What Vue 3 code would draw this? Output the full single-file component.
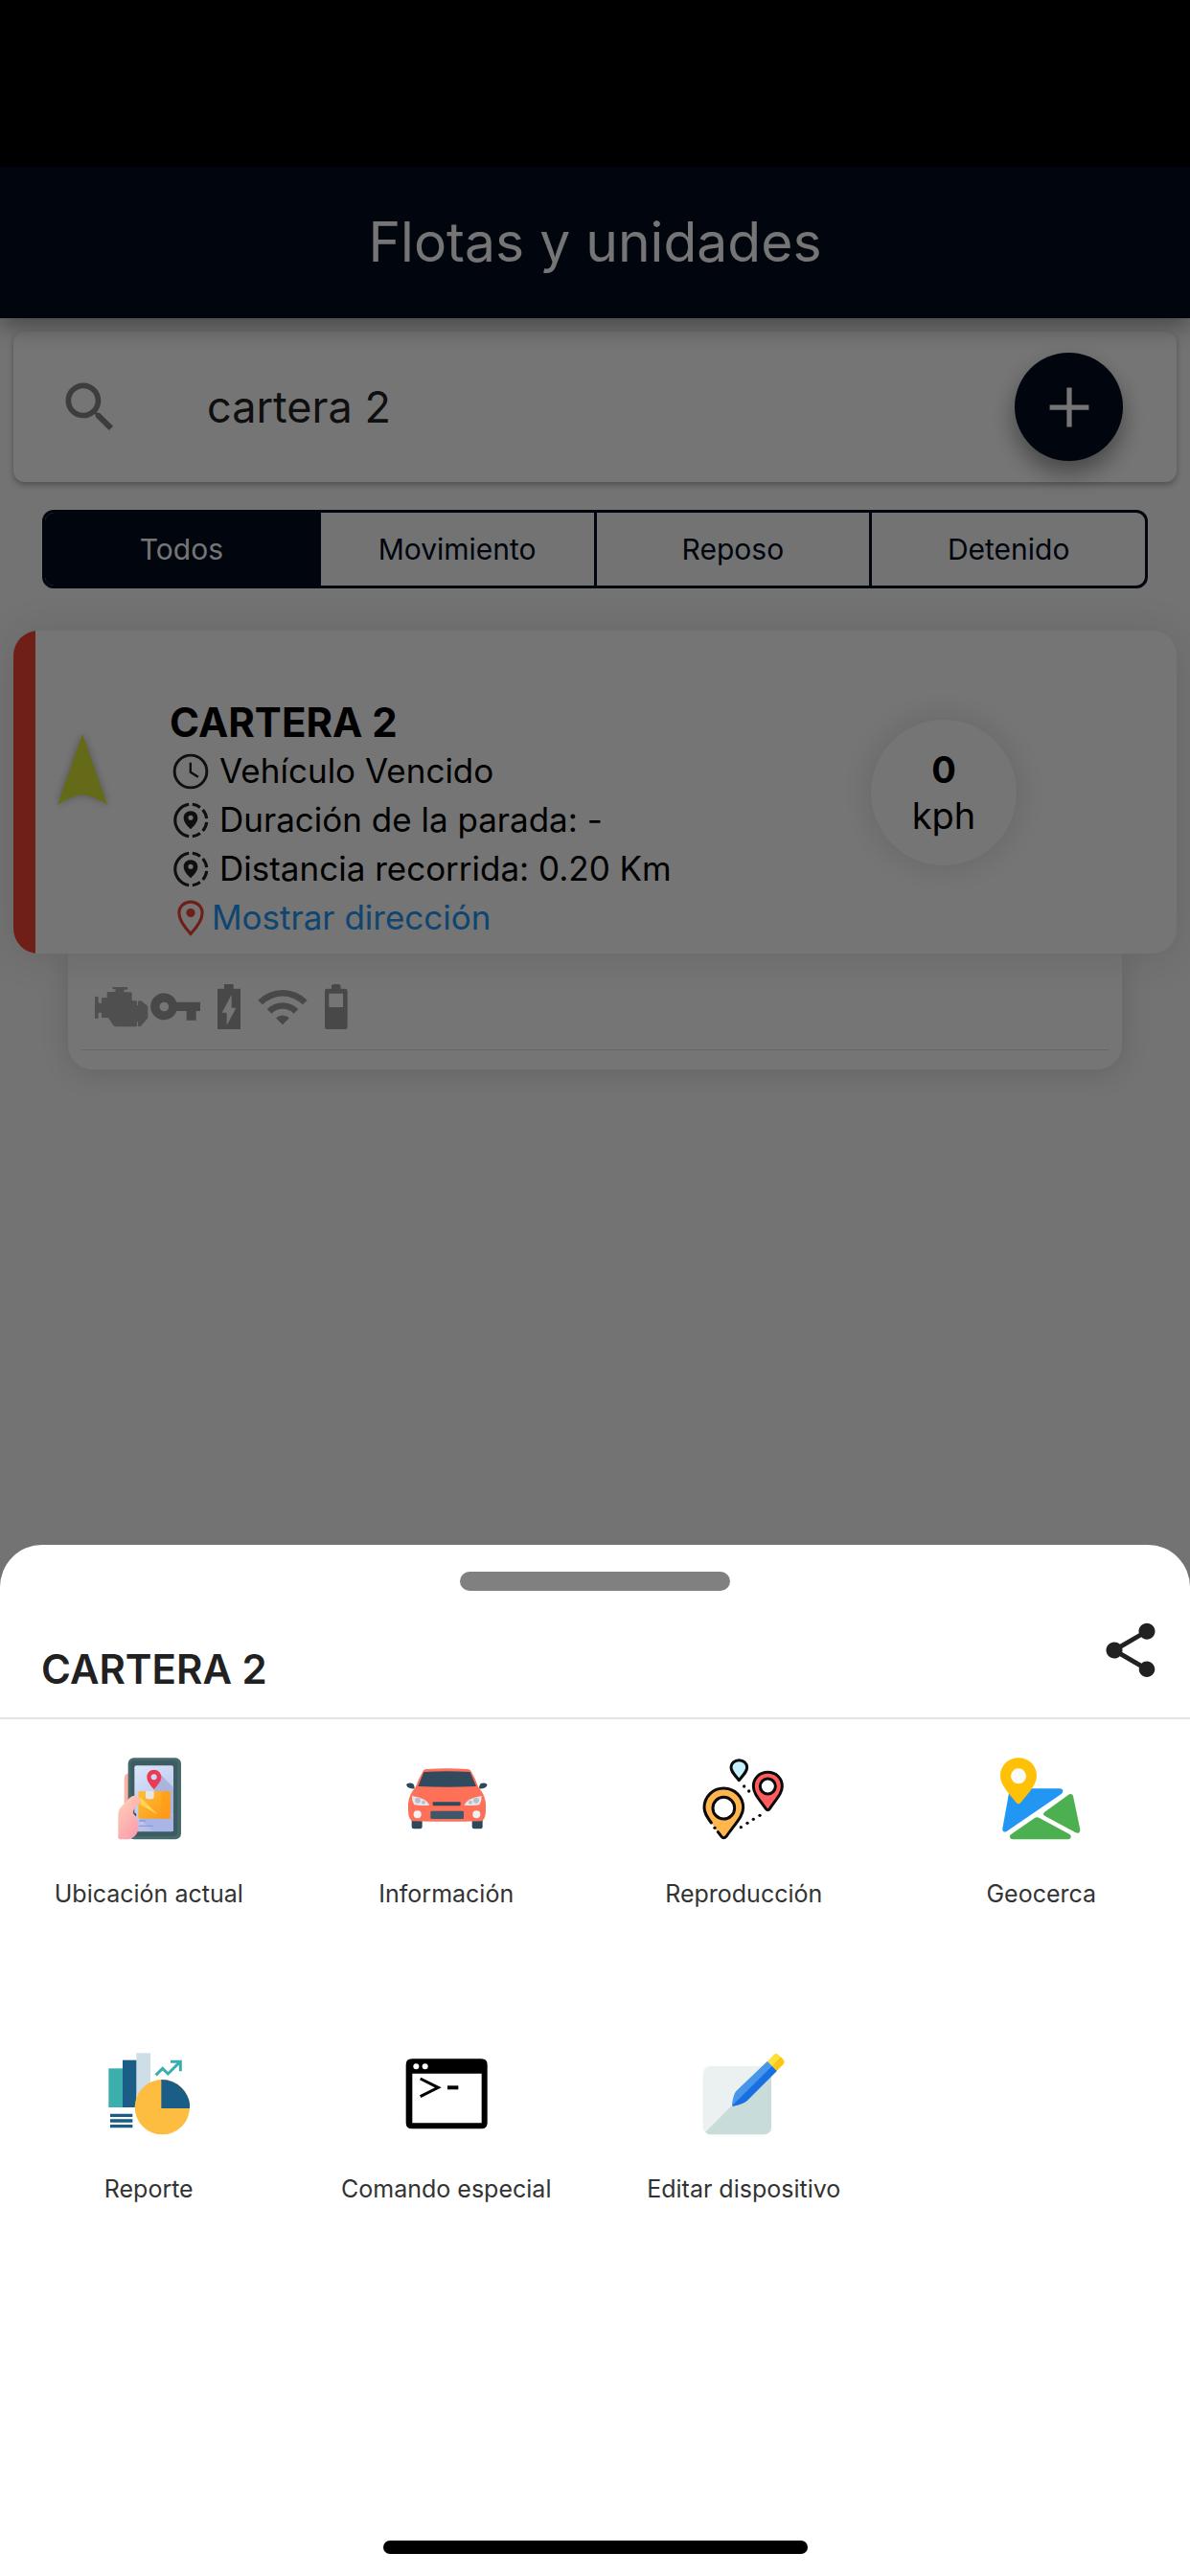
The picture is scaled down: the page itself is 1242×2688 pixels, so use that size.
<script setup>
  import { ref } from "vue"

  const search = ref("cartera 2")
  const activeFilter = ref("Todos")
  const filters = ["Todos", "Movimiento", "Reposo", "Detenido"]

  const unit = {
    name: "CARTERA 2",
    status: "Vehículo Vencido",
    stop: "-",
    distance: "0.20 Km",
    speed: 0
  }
</script>

<template>
  <div class="page">
    <div class="status-bar"></div>
    <header class="app-header">
      <h1>Flotas y unidades</h1>
    </header>

    <main>
      <div class="search-card">
        <label for="unit-search" aria-label="Buscar">
          <svg class="search-icon" viewBox="0 0 24 24">
            <path d="M15.5 14h-.79l-.28-.27C15.41 12.59 16 11.11 16 9.5 16 5.91 13.09 3 9.5 3S3 5.91 3 9.5 5.91 16 9.5 16c1.61 0 3.09-.59 4.23-1.57l.27.28v.79l5 4.99L20.49 19l-4.99-5zm-6 0C7.01 14 5 11.99 5 9.5S7.01 5 9.5 5 14 7.01 14 9.5 11.99 14 9.5 14z" />
          </svg>
        </label>
        <input id="unit-search" v-model="search" type="text" />
        <button class="add-button" aria-label="Agregar">
          <svg viewBox="0 0 24 24"><path d="M19 12.9h-6.1V19h-1.8v-6.1H5v-1.8h6.1V5h1.8v6.1H19z" /></svg>
        </button>
      </div>

      <div class="filters">
        <button
          v-for="filter in filters"
          :key="filter"
          :class="{ active: filter === activeFilter }"
          @click="activeFilter = filter"
        >{{ filter }}</button>
      </div>

      <section class="unit-card">
        <div class="unit-marker">
          <svg viewBox="0 0 54 76"><path d="M27 1 L53 75 Q41 66 27 64 Q13 66 1 75 Z" /></svg>
        </div>
        <div class="unit-info">
          <h2>{{ unit.name }}</h2>
          <div class="unit-row">
            <svg viewBox="0 0 24 24">
              <circle cx="12" cy="12" r="9.2" fill="none" stroke="#212121" stroke-width="1.6" />
              <path d="M11.9 7v5.4l4.4 2.8" fill="none" stroke="#212121" stroke-width="1.3" />
            </svg>
            <span>{{ unit.status }}</span>
          </div>
          <div class="unit-row">
            <svg viewBox="0 0 24 24">
              <path d="M11 2.9A9.2 9.2 0 0 0 11 21.1" fill="none" stroke="#212121" stroke-width="1.7" />
              <path d="M13 2.9a9.2 9.2 0 0 1 4.4 1.7M18.9 6a9.2 9.2 0 0 1 2.2 5M21.1 13a9.2 9.2 0 0 1-2.2 5M17.4 19.4a9.2 9.2 0 0 1-4.4 1.7" fill="none" stroke="#212121" stroke-width="1.7" />
              <path fill-rule="evenodd" d="M12 6.7c-2.3 0-4 1.7-4 3.9 0 1.9 1.3 3.9 4 6.4 2.7-2.5 4-4.5 4-6.4 0-2.2-1.7-3.9-4-3.9zm0 5.2a1.4 1.4 0 1 1 0-2.8 1.4 1.4 0 0 1 0 2.8z" fill="#212121" />
            </svg>
            <span>Duración de la parada: {{ unit.stop }}</span>
          </div>
          <div class="unit-row">
            <svg viewBox="0 0 24 24">
              <path d="M11 2.9A9.2 9.2 0 0 0 11 21.1" fill="none" stroke="#212121" stroke-width="1.7" />
              <path d="M13 2.9a9.2 9.2 0 0 1 4.4 1.7M18.9 6a9.2 9.2 0 0 1 2.2 5M21.1 13a9.2 9.2 0 0 1-2.2 5M17.4 19.4a9.2 9.2 0 0 1-4.4 1.7" fill="none" stroke="#212121" stroke-width="1.7" />
              <path fill-rule="evenodd" d="M12 6.7c-2.3 0-4 1.7-4 3.9 0 1.9 1.3 3.9 4 6.4 2.7-2.5 4-4.5 4-6.4 0-2.2-1.7-3.9-4-3.9zm0 5.2a1.4 1.4 0 1 1 0-2.8 1.4 1.4 0 0 1 0 2.8z" fill="#212121" />
            </svg>
            <span>Distancia recorrida: {{ unit.distance }}</span>
          </div>
          <a class="unit-row address" href="#">
            <svg viewBox="0 0 24 24">
              <path d="M12 2.8c-3.7 0-6.6 2.7-6.6 6.4 0 3.2 2.3 7.2 6.6 11.8 4.3-4.6 6.6-8.6 6.6-11.800 0-3.7-2.9-6.4-6.6-6.4z" fill="none" stroke="#f44336" stroke-width="1.7" />
              <circle cx="12" cy="9" r="2.5" fill="#f44336" />
            </svg>
            <span>Mostrar dirección</span>
          </a>
        </div>
        <div class="speed">
          <strong>{{ unit.speed }}</strong>
          <span>kph</span>
        </div>
      </section>

      <section class="sensors">
        <div class="sensor-icons">
          <!-- engine -->
          <svg viewBox="57 72 168 168" class="muted">
            <path d="M116 93h40q4 0 4 4t-4 4h-7q-3 7 0 8h20q4 0 4 4v23h12q4 0 4 4v10h3v-10q0-4 4-4h6l19 15q2 2 2 5v31q0 3-2 5l-18 21q-3 4-7 4-4 0-4-4v-11h-3v11q0 4-4 4h-63q-4 0-7-4l-16-24H82q-4 0-4-4v-12H68v15q0 4-4 4h-3q-4 0-4-4v-62q0-4 4-4h3q4 0 4 4v17h10v-13q0-4 4-4h13v-14q0-4 4-4h18q8-1 4-8h-5q-4 0-4-4t4-4z" />
          </svg>
          <!-- ignition key -->
          <svg viewBox="226 72 168 168">
            <path fill-rule="evenodd" d="M275 112a42 42 0 1 0 39 56h31v29h30v-29h13v-28h-74a42 42 0 0 0-39-28zm0 28a14.5 14.5 0 1 1 0 29 14.5 14.5 0 0 1 0-29z" />
          </svg>
          <!-- charging -->
          <svg viewBox="396 72 168 168">
            <path fill-rule="evenodd" d="M465 84h29v14h22v127h-72V98h21zM488 117l-30 56h15v40l29-55h-14z" />
          </svg>
          <!-- signal -->
          <svg viewBox="565 72 168 168">
            <path d="M572 134a109 109 0 0 1 154 0l-14 14a89 89 0 0 0-126 0zM600 162a69 69 0 0 1 98 0l-14 14a49 49 0 0 0-70 0zM628 190a30 30 0 0 1 42 0l-21 21z" />
          </svg>
          <!-- battery level -->
          <svg viewBox="735 72 168 168">
            <path fill-rule="evenodd" d="M811 84h16q6 0 6 8v6h14q7 0 7 7v113q0 7-7 7h-57q-7 0-7-7V105q0-7 7-7h14v-6q0-8 7-8zM796 113v43h44v-43z" />
          </svg>
        </div>
      </section>
    </main>

    <div class="scrim"></div>

    <section class="sheet">
      <div class="handle"></div>
      <div class="sheet-header">
        <h2>{{ unit.name }}</h2>
        <button aria-label="Compartir">
          <svg viewBox="0 0 24 24">
            <path d="M18 16.08c-.76 0-1.44.3-1.96.77L8.91 12.7c.05-.23.09-.46.09-.7s-.04-.47-.09-.7l7.05-4.11c.54.5 1.25.81 2.04.81 1.66 0 3-1.34 3-3s-1.34-3-3-3-3 1.34-3 3c0 .24.04.47.09.7L8.04 9.81C7.5 9.31 6.79 9 6 9c-1.66 0-3 1.34-3 3s1.34 3 3 3c.79 0 1.5-.31 2.04-.81l7.12 4.16c-.05.21-.08.43-.08.65 0 1.61 1.31 2.92 2.92 2.92s2.92-1.31 2.92-2.92-1.31-2.92-2.92-2.92z" />
          </svg>
        </button>
      </div>

      <div class="actions">
        <button class="action">
          <svg viewBox="67 72 258 258">
            <defs>
              <linearGradient id="handSkin" x1="0" y1="0" x2="0.6" y2="1">
                <stop offset="0" stop-color="#ffd3b5" />
                <stop offset="1" stop-color="#fb9fb0" />
              </linearGradient>
              <linearGradient id="phoneScreen" x1="0" y1="0" x2="0.4" y2="1">
                <stop offset="0" stop-color="#dbe6fa" />
                <stop offset="1" stop-color="#b3bdea" />
              </linearGradient>
              <linearGradient id="parcel" x1="0" y1="0" x2="1" y2="1">
                <stop offset="0" stop-color="#ffbf35" />
                <stop offset="1" stop-color="#fb9414" />
              </linearGradient>
            </defs>
            <path d="M134 121q-14 2-14 18v90h14z" fill="#fbb3a6" />
            <rect x="132" y="73" width="166" height="255" rx="18" fill="#466a6c" />
            <rect x="140" y="82" width="147" height="236" rx="12" fill="#3d5c61" />
            <rect x="152" y="97" width="122" height="207" rx="6" fill="url(#phoneScreen)" />
            <path d="M233 124l41 42v90l-62-84z" fill="#aab4dc" />
            <path d="M165 260l46 43h63v-50z" fill="#a9b5e4" />
            <path d="M166 270h21M166 286h44" stroke="#8f9ad6" stroke-width="4" />
            <path d="M213 110c-13 0-22 10-22 23 0 12 8 22 22 39 14-17 23-27 23-39 0-13-10-23-23-23z" fill="#e93b55" />
            <circle cx="213" cy="133" r="9" fill="#cdd9f6" />
            <rect x="164" y="177" width="100" height="86" rx="5" fill="url(#parcel)" />
            <path d="M237 177h22q5 0 5 5v76q0 5-5 5h-22z" fill="#ff9b18" opacity="0.6" />
            <path d="M170 196l54 54-52-30z" fill="#ffd65a" />
            <path d="M187 177h26v19q0 6-6 6h-14q-6 0-6-6z" fill="#e6e6e6" />
            <circle cx="151" cy="252" r="7" fill="#27474f" />
            <path d="M101 320v-70q0-14 10-24l26-28q11-11 25-5 12 7 7 20-3 7-11 13-11 9-10 20 17 17 17 42 0 28-27 39-4 1-8 1h-21q-8 0-8-8z" fill="url(#handSkin)" />
          </svg>
          <span>Ubicación actual</span>
        </button>

        <button class="action">
          <svg viewBox="68 72 258 258">
            <path d="M88 264h33v25q0 6-6 6H94q-6 0-6-6zM277 264h33v25q0 6-6 6h-21q-6 0-6-6z" fill="#2f4859" />
            <path d="M71 157q5-8 17-5 9 2 9 17-13 2-22-5zM325 157q-5-8-17-5-9 2-9 17 13 2 22-5z" fill="#2f4859" />
            <path d="M125 112q4-4 10-4 63-5 128 0 6 0 10 5 15 24 24 52 20 22 23 50v25q-1 26-14 31-108 3-215 0-13-6-14-32v-24q3-28 23-50 10-28 25-53z" fill="#ff7058" />
            <path d="M126 117q73-4 145 0l19 45q-91 4-182 0z" fill="#324a5e" />
            <path d="M89 192q47 8 55 29-27 3-48-1-8-13-7-28zM307 192q-47 8-55 29 27 3 48-1 8-13 7-28z" fill="#e6e9ee" />
            <g fill="#b9bec8">
              <circle cx="107" cy="206" r="9" />
              <circle cx="125" cy="212" r="6" />
              <circle cx="290" cy="206" r="9" />
              <circle cx="272" cy="212" r="6" />
            </g>
            <rect x="154" y="211" width="87" height="12" rx="3" fill="#324a5e" />
            <rect x="147" y="239" width="104" height="25" rx="4" fill="#3f566b" />
            <circle cx="106" cy="250" r="12" fill="#f1f2f4" />
            <circle cx="291" cy="250" r="12" fill="#f1f2f4" />
          </svg>
          <span>Información</span>
        </button>

        <button class="action">
          <svg viewBox="70 72 258 258">
            <g stroke="#0a0a0a" stroke-width="9" stroke-linecap="round" stroke-linejoin="round">
              <path d="M185 80c-14 0-25 10-25 23 0 12 9 21 25 40 16-19 25-28 25-40 0-13-11-23-25-23z" fill="#c6f0fd" />
              <path d="M275 118c-26 0-45 19-45 44 0 22 16 38 39 70q6 8 12 0c22-32 39-48 39-70 0-25-19-44-45-44z" fill="#ff5c5e" />
              <circle cx="275" cy="162" r="24" fill="#fff" />
              <path d="M98 276c-14-19-22-31-22-47 0-34 27-61 61-61s61 27 61 61c0 27-24 48-53 90q-8 9-15 0l-11-14" fill="#ffb64f" />
              <circle cx="137" cy="230" r="34" fill="#fff" />
            </g>
            <g fill="#0a0a0a">
              <circle cx="109" cy="292" r="5" />
              <circle cx="201" cy="162" r="5" />
              <circle cx="216" cy="177" r="5" />
              <circle cx="191" cy="290" r="5" />
              <circle cx="211" cy="277" r="5" />
              <circle cx="230" cy="265" r="5" />
              <circle cx="250" cy="253" r="5" />
            </g>
          </svg>
          <span>Reproducción</span>
        </button>

        <button class="action">
          <svg viewBox="71 72 258 258">
            <path d="M107 169h150q10 0 10 8 0 5-5 9L92 302q-7 5-12 0-3-3-2-8l21-116q2-9 8-9z" fill="#2196f3" />
            <path d="M287 187q9-4 12 5l22 105q1 8-5 11-4 1-9-1l-96-52q-10-6-1-13z" fill="#4caf50" />
            <path d="M180 260q6-3 12 0l96 52q6 4 4 10-2 6-8 6H110q-7 0-9-6-2-5 3-9z" fill="#4caf50" />
            <path d="M128 73c-32 0-57 24-57 56 0 27 23 51 50 84q7 8 14 0c27-33 50-57 50-84 0-32-25-56-57-56z" fill="#ffc107" />
            <circle cx="128" cy="130" r="24" fill="#fafafa" />
          </svg>
          <span>Geocerca</span>
        </button>

        <button class="action">
          <svg viewBox="67 68 258 258">
            <path d="M158 69h44v130h-44z" fill="#cddee7" />
            <path d="M115 91h43v148h-43z" fill="#1a5d86" />
            <path d="M71 117h44v122H71z" fill="#3aafad" />
            <path d="M76 264h70M76 281h70M76 298h70" stroke="#1a5d86" stroke-width="10" />
            <circle cx="239" cy="238" r="86" fill="#fdbd41" />
            <path d="M236 152q38 0 64 26 26 26 26 64h-90z" fill="#1a5d86" />
            <path d="M219 138l21-21 17 17 38-38M265 96h31v30" fill="none" stroke="#3aafad" stroke-width="9" />
          </svg>
          <span>Reporte</span>
        </button>

        <button class="action">
          <svg viewBox="68 68 258 258">
            <path fill-rule="evenodd" d="M89 87h217q19 0 19 19v181q0 19-19 19H89q-19 0-19-19V106q0-19 19-19zM90 133v155h217V133z" fill="#000" />
            <circle cx="102" cy="111" r="9" fill="#fff" />
            <circle cx="130" cy="111" r="9" fill="#fff" />
            <path d="M115 149l56 28-56 28" fill="none" stroke="#000" stroke-width="9" />
            <path d="M200 171h34v12h-34z" fill="#000" />
          </svg>
          <span>Comando especial</span>
        </button>

        <button class="action">
          <svg viewBox="999 68 258 258">
            <rect x="1001" y="110" width="214" height="214" rx="24" fill="#ebf1f1" />
            <path d="M1009 316L1215 110v190q0 24-24 24h-166q-10 0-16-8z" fill="#c8dcda" />
            <path d="M1191 110q24 0 24 24v1l-25-25z" fill="#ebf1f1" />
            <path d="M1203 94l30 30-94 94q-10 10-43 17-5-1-4-5 4-32 13-42z" fill="#4896ec" />
            <path d="M1218 109l15 15-94 94q-10 10-43 17-2 0-3-2z" fill="#1a6fe0" />
            <path d="M1203 94l21-21q6-6 12 0l15 15q8 8 0 17l-19 19z" fill="#ffe03a" />
            <path d="M1218 109l26-28 8 8q7 8 0 16l-19 19z" fill="#fcc619" />
          </svg>
          <span>Editar dispositivo</span>
        </button>
      </div>

      <div class="home-indicator"></div>
    </section>
  </div>
</template>

<style>
body {
  background-color: #fafafa;
}
</style>

<style scoped>
.page {
  position: relative;
  min-height: 100vh;
  overflow: hidden;
  background-color: #fafafa;
  font-family: Inter, "Liberation Sans", sans-serif;
  color: #000;
}

h1,
h2 {
  margin: 0;
}

button {
  margin: 0;
  padding: 0;
  border: none;
  background: none;
  font-family: inherit;
  color: inherit;
  cursor: pointer;
}

svg {
  display: block;
  flex-shrink: 0;
}

.status-bar {
  height: 174px;
  background-color: #000;
}

.app-header {
  position: relative;
  z-index: 1;
  display: flex;
  align-items: center;
  justify-content: center;
  height: 158px;
  background-color: #000b20;
  box-shadow: 0 8px 24px rgba(0, 0, 0, 0.4);
}

.app-header h1 {
  font-size: 57px;
  font-weight: 400;
  line-height: 66px;
  color: #fff;
}

.search-card {
  display: flex;
  align-items: center;
  gap: 88px;
  margin: 14px 14px 0;
  padding: 22px 56px 22px 46px;
  background-color: #fff;
  border-radius: 12px;
  box-shadow: 0 3px 6px rgba(0, 0, 0, 0.3);
}

.search-icon {
  width: 68px;
  height: 68px;
  fill: #858585;
}

.search-card input {
  flex: 1;
  min-width: 0;
  padding: 0;
  border: none;
  outline: none;
  background: none;
  font-family: inherit;
  font-size: 45px;
  line-height: 56px;
  color: #212121;
}

.add-button {
  display: flex;
  align-items: center;
  justify-content: center;
  width: 113px;
  height: 113px;
  border-radius: 50%;
  background-color: #000b20;
  box-shadow: 0 12px 24px rgba(0, 0, 0, 0.4);
}

.add-button svg {
  width: 70px;
  height: 70px;
  fill: #fff;
}

.filters {
  display: flex;
  margin: 29px 44px 0;
  border: 3px solid #000b20;
  border-radius: 12px;
  overflow: hidden;
}

.filters button {
  flex: 1;
  padding: 18px 0;
  font-size: 30px;
  line-height: 40px;
  color: #000b20;
}

.filters button + button {
  border-left: 3px solid #000b20;
}

.filters .active {
  background-color: #000b20;
  color: #fff;
}

.unit-card {
  position: relative;
  z-index: 1;
  display: flex;
  align-items: center;
  margin: 44px 14px 0;
  padding: 0 167px 0 23px;
  border-radius: 26px;
  /* status stripe on the left edge */
  background: linear-gradient(to right, #f44336 23px, #fff 23px);
  box-shadow: 0 3px 44px rgba(0, 0, 0, 0.12);
}

.unit-marker {
  width: 140px;
  padding-left: 22px;
  box-sizing: border-box;
}

.unit-marker svg {
  width: 54px;
  height: 76px;
  margin-bottom: 48px;
  fill: #dbe633;
  filter: drop-shadow(0 0 4px rgba(0, 0, 0, 0.3));
}

.unit-info {
  flex: 1;
  padding: 70px 0 12px;
}

.unit-info h2 {
  font-size: 42px;
  font-weight: 700;
  line-height: 51px;
}

.unit-row {
  display: flex;
  align-items: center;
  gap: 8px;
  font-size: 35px;
  line-height: 51px;
}

.unit-row svg {
  width: 44px;
  height: 44px;
}

.address {
  gap: 0;
  color: #2196f3;
  text-decoration: none;
}

.speed {
  display: flex;
  flex-direction: column;
  align-items: center;
  justify-content: center;
  width: 152px;
  height: 152px;
  border-radius: 50%;
  background-color: #fff;
  box-shadow: 0 0 36px rgba(0, 0, 0, 0.14);
  font-size: 38px;
  line-height: 48px;
}

.sensors {
  margin: 0 71px;
  padding: 28px 14px 20px;
  border-radius: 0 0 26px 26px;
  background-color: #fff;
  box-shadow: 0 3px 30px rgba(0, 0, 0, 0.14);
}

.sensor-icons {
  display: flex;
  padding: 0 14px 16px;
  border-bottom: 1px solid #dfdfdf;
}

.sensor-icons svg {
  width: 56px;
  height: 56px;
  fill: #9e9e9e;
}

.sensor-icons .muted {
  fill: #adadad;
}

.scrim {
  position: absolute;
  inset: 0;
  z-index: 2;
  background-color: rgba(0, 0, 0, 0.54);
}

/* bottom sheet slides over the dimmed page */
.sheet {
  position: absolute;
  left: 0;
  right: 0;
  bottom: 0;
  z-index: 3;
  padding: 28px 0 278px;
  border-radius: 44px 44px 0 0;
  background-color: #fff;
}

.handle {
  width: 282px;
  height: 20px;
  margin: 0 auto;
  border-radius: 10px;
  background-color: #808080;
}

.sheet-header {
  display: flex;
  align-items: flex-start;
  justify-content: space-between;
  padding: 28px 28px 25px 43px;
  border-bottom: 2px solid #e4e4e4;
}

.sheet-header h2 {
  padding-top: 29px;
  font-size: 42px;
  font-weight: 600;
  line-height: 50px;
  color: #212121;
}

.sheet-header svg {
  width: 68px;
  height: 68px;
  fill: #212121;
}

.actions {
  display: grid;
  grid-template-columns: repeat(4, 1fr);
}

.action {
  display: flex;
  flex-direction: column;
  align-items: center;
  gap: 41px;
  height: 308px;
  padding-top: 40px;
  font-size: 25px;
  line-height: 30px;
  color: #333;
}

.action svg {
  width: 86px;
  height: 86px;
}

.home-indicator {
  position: absolute;
  left: 50%;
  bottom: 23px;
  width: 443px;
  height: 14px;
  margin-left: -221px;
  border-radius: 7px;
  background-color: #000;
}
</style>
